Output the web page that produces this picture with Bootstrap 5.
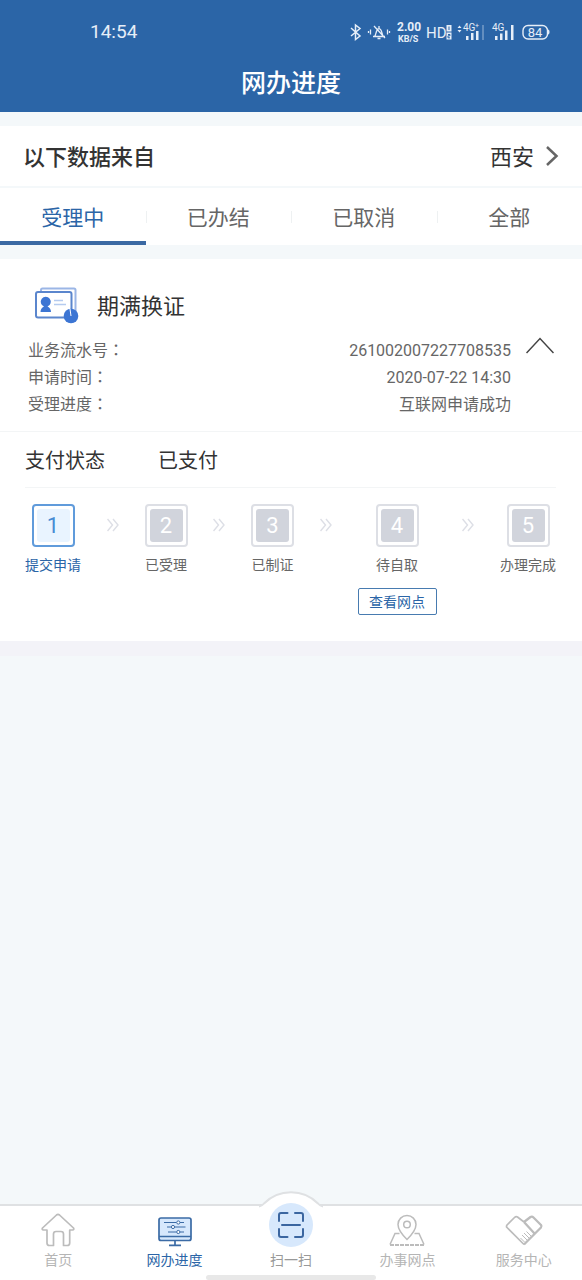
<!DOCTYPE html>
<html lang="zh-CN">
<head>
<meta charset="utf-8">
<meta name="viewport" content="width=device-width, initial-scale=1">
<title>网办进度</title>
<link href="https://cdn.jsdelivr.net/npm/bootstrap@5.3.0/dist/css/bootstrap.min.css" rel="stylesheet">
<style>
  :root { --brand: #2b65a7; --page: #f4f8fa; --muted: #666; }
  body { font-family: Roboto, "Noto Sans CJK SC", sans-serif; background: var(--page); color: #333; }
  button, a { font-family: inherit; }
  .app-head { background: var(--brand); height: 112px; }
  .status-line { height: 56px; padding: 8px 30px 0 90px; font-size: 19px; line-height: 24px; color: #e6eef8; }
  .app-title { font-size: 25px; line-height: 56px; font-weight: 500; }
  .panel { margin-top: 14px; background: #fff; }
  .source-row { height: 62px; padding: 0 20px 0 23px; border-bottom: 2px solid var(--page); font-size: 22px; font-weight: 500; line-height: 64px; }
  .source-row button { color: inherit; line-height: 64px; }
  .source-row svg { margin-bottom: 4px; }
  .tab-row { height: 57px; }
  .tab-row .tab-btn { position: relative; border: 0; background: none; font-size: 21px; line-height: 32px; padding: 6px 0 0; color: var(--muted); border-bottom: 4px solid transparent; }
  .tab-row .tab-btn + .tab-btn::before { content: ""; position: absolute; left: 0; top: 23px; height: 12px; border-left: 1px solid #eef1f2; }
  .tab-row .tab-btn.active { color: var(--brand); border-bottom-color: #3b69a3; }
  .order-title { font-size: 22px; line-height: 32px; font-weight: 400; }
  .order-head { padding: 28px 28px 13px; border-bottom: 1px solid #f3f5f6; }
  .order-name { gap: 17px; margin-bottom: 10px; }
  .facts { font-size: 16px; line-height: 27px; color: var(--muted); }
  .facts .colon { font-family: "Noto Sans CJK TC", sans-serif; line-height: 1; }
  .fold-btn { margin-left: 15px; line-height: 1; }
  .pay-row { font-size: 20px; line-height: 54px; padding-top: 2px; height: 56px; border-bottom: 1px solid #f3f5f6; gap: 53px; }
  .order-body { padding: 0 26px 26px 25px; }
  .steps { padding-top: 16px; }
  .step-item { font-size: 14px; line-height: 20px; color: var(--muted); }
  .step-box { width: 43px; height: 43px; border: 2px solid #dddfe5; border-radius: 4px; padding: 3px; margin-bottom: 8px; }
  .step-num { display: block; height: 33px; border-radius: 3px; background: #d1d4dc; color: #fff; font-size: 22px; line-height: 34px; text-align: center; }
  .step-item.current { color: var(--brand); }
  .step-item.current .step-box { border-color: #609bdb; }
  .step-item.current .step-num { background: #e9f4ff; color: #468bd3; }
  .step-arrow { margin-top: 14px; }
  .branch-btn { margin-top: 13px; width: 79px; height: 27px; padding: 0; border: 1px solid #477bb0; border-radius: 2px; background: #fff; color: var(--brand); font-size: 14px; line-height: 27px; }
  .band { height: 15px; background: #f3f3f8; }
  .dock { border-top: 2px solid #dfe1e3; height: 76px; }
  .dock a { flex: 1 1 0; font-size: 14px; line-height: 20px; color: #b5b5b5; padding-top: 6px; text-decoration: none; }
  .dock a.active { color: var(--brand); }
  .dock a.scan { color: #999; }
  .dock a svg { display: block; height: 38px; }
  .bump { position: absolute; left: 50%; top: -15px; transform: translateX(-50%); }
  .grip { position: absolute; left: 50%; bottom: 0; transform: translateX(-50%); width: 170px; height: 5px; border-radius: 3px; background: #e8e8e8; }
</style>
</head>
<body>
<div class="d-flex flex-column min-vh-100">
  <header class="app-head text-white">
    <div class="status-line d-flex justify-content-between align-items-center">
      <time>14:54</time>
      <svg width="204" height="24" viewBox="0 0 204 24" fill="none" stroke="#e6eef8" stroke-width="1.4" role="img" aria-label="状态图标">
        <path d="M3 8l9 8-4.500 3.500V5L12 8.500 3 16" stroke-width="1.500"/>
        <path d="M25 16.500h12M26.500 16.500c2-2 1-7 4.500-8 3.500 1 2.500 6 4.500 8M31 6v2M29.500 18.500h3M26 6l11 12M22.500 9.500v5M39.500 9.500v5M20.500 11v2M41.500 11v2" stroke-width="1.300"/>
        <g fill="#e6eef8" stroke="none" font-family="Roboto, sans-serif">
          <text x="49" y="11" font-size="12" font-weight="700">2.00</text>
          <text x="50" y="22" font-size="9" font-weight="700">KB/S</text>
          <text x="78" y="18" font-size="15">HD</text>
          <text x="115" y="11" font-size="10">4G</text>
          <text x="127" y="8" font-size="7">+</text>
          <text x="144" y="11" font-size="10">4G</text>
          <path d="M98.500 5h5v6.500h-5zM98.500 12.500h5v7h-5z"/>
          <path d="M109.500 8l2-2.500 2 2.500zM109.500 10l2 2.500 2-2.500zM118 16h2.500v4H118zM123 13h2.500v7H123zM128 11h2.500v9H128zM147 16h2.500v4H147zM152 13.500h2.500v6.500H152zM157 10.500h2.500v9.500H157zM163 5h2.500v15H163z"/>
          <path d="M134 5h2v15h-2z" opacity=".3"/>
          <path d="M200 9.500c2 0 2 5 0 5z"/>
          <text x="187" y="16.500" font-size="13" text-anchor="middle">84</text>
        </g>
        <path d="M101 6.500v3.500M100 14.500h2v1.300h-2v2h2" stroke="#2b65a7" stroke-width="1"/>
        <rect x="175" y="5.500" width="24.500" height="13.500" rx="5"/>
      </svg>
    </div>
    <h1 class="app-title text-center m-0">网办进度</h1>
  </header>

  <main>
    <section class="panel">
      <div class="source-row d-flex justify-content-between align-items-start">
        <span>以下数据来自</span>
        <button type="button" class="border-0 bg-transparent p-0 d-flex align-items-center">西安
          <svg class="ms-2" width="20" height="22" viewBox="0 0 20 22" fill="none" stroke="#666" stroke-width="2.500"><path d="M5 2l9.500 9L5 20"/></svg>
        </button>
      </div>
      <nav class="tab-row row row-cols-4 g-0" aria-label="办理状态">
        <button type="button" class="tab-btn col active">受理中</button>
        <button type="button" class="tab-btn col">已办结</button>
        <button type="button" class="tab-btn col">已取消</button>
        <button type="button" class="tab-btn col">全部</button>
      </nav>
    </section>

    <article class="panel">
      <div class="order-head">
        <div class="order-name d-flex align-items-center">
          <svg width="52" height="40" viewBox="0 0 52 40" fill="none">
            <path d="M13 4.500v-1.500q0-1.500 1.500-1.500H46q1.500 0 1.500 1.500V26" stroke="#9bb6e6" stroke-width="2"/>
            <rect x="8" y="5" width="35.500" height="25.500" rx="2" fill="#fff" stroke="#5b86cd" stroke-width="2"/>
            <path d="M26 13.500h9M26 17.500h12" stroke="#b5cbef" stroke-width="1.500"/>
            <path d="M12.500 25q0-4 3.500-5.500a5 5 0 1 1 3.500 0q3.500 1.500 3.500 5.500z" fill="#3c75d3"/>
            <circle cx="43" cy="29" r="7.300" fill="#3c75d3"/><path d="M43 29l-1-7" stroke="#fff"/>
          </svg>
          <h2 class="order-title m-0">期满换证</h2>
        </div>
        <div class="d-flex align-items-start">
          <div class="facts flex-grow-1">
            <div class="d-flex justify-content-between"><span>业务流水号<span class="colon" lang="zh-TW">：</span></span><span>261002007227708535</span></div>
            <div class="d-flex justify-content-between"><span>申请时间<span class="colon" lang="zh-TW">：</span></span><span>2020-07-22 14:30</span></div>
            <div class="d-flex justify-content-between"><span>受理进度<span class="colon" lang="zh-TW">：</span></span><span>互联网申请成功</span></div>
          </div>
          <button type="button" class="fold-btn border-0 bg-transparent p-0" aria-label="收起">
            <svg class="d-block" width="28" height="18" viewBox="0 0 28 18" fill="none" stroke="#444" stroke-width="1.500"><path d="M.500 16L14 1.500 27.500 16"/></svg>
          </button>
        </div>
      </div>

      <div class="order-body">
        <div class="pay-row d-flex"><span>支付状态</span><span>已支付</span></div>
        <div class="steps d-flex justify-content-between align-items-start">
          <div class="step-item current d-flex flex-column align-items-center"><div class="step-box"><span class="step-num">1</span></div>提交申请</div>
          <svg class="step-arrow" width="12" height="14" viewBox="0 0 12 14" fill="none" stroke="#dddfe6" stroke-width="1.400"><path d="M.500 1l5 6-5 6M6 1l5 6-5 6"/></svg>
          <div class="step-item d-flex flex-column align-items-center"><div class="step-box"><span class="step-num">2</span></div>已受理</div>
          <svg class="step-arrow" width="12" height="14" viewBox="0 0 12 14" fill="none" stroke="#dddfe6" stroke-width="1.400"><path d="M.500 1l5 6-5 6M6 1l5 6-5 6"/></svg>
          <div class="step-item d-flex flex-column align-items-center"><div class="step-box"><span class="step-num">3</span></div>已制证</div>
          <svg class="step-arrow" width="12" height="14" viewBox="0 0 12 14" fill="none" stroke="#dddfe6" stroke-width="1.400"><path d="M.500 1l5 6-5 6M6 1l5 6-5 6"/></svg>
          <div class="step-item d-flex flex-column align-items-center"><div class="step-box"><span class="step-num">4</span></div>待自取<button type="button" class="branch-btn">查看网点</button></div>
          <svg class="step-arrow" width="12" height="14" viewBox="0 0 12 14" fill="none" stroke="#dddfe6" stroke-width="1.400"><path d="M.500 1l5 6-5 6M6 1l5 6-5 6"/></svg>
          <div class="step-item d-flex flex-column align-items-center"><div class="step-box"><span class="step-num">5</span></div>办理完成</div>
        </div>
      </div>
    </article>
    <div class="band"></div>
  </main>

  <nav class="dock d-flex bg-white position-relative mt-auto" aria-label="主导航">
    <svg class="bump" width="64" height="62" viewBox="0 0 64 62">
      <path d="M0 15.500Q3 15 5 12.500A38 38 0 0 1 59 12.500Q61 15 64 15.500V40H0z" fill="#fff"/>
      <path d="M0 15.500Q3 15 5 12.500A38 38 0 0 1 59 12.500Q61 15 64 15.500" fill="none" stroke="#dfe1e3" stroke-width="2"/>
      <circle cx="32" cy="34" r="22" fill="#d7e8fc"/>
    </svg>
    <a href="#" class="d-flex flex-column align-items-center position-relative">
      <svg width="40" viewBox="0 0 40 38" fill="none" stroke="#bcbcbc" stroke-width="1.700" stroke-linejoin="round"><path d="M18.500 3q1.500-1.300 3 0L35.500 16q1 1.800-1 2h-2.800V31q0 2.500-2.500 2.500h-3.700V22q0-2.500-2.500-2.500h-5q-2.500 0-2.500 2.500v11.500H11.500Q9 33.500 9 31V18H5.500q-2-.200-1-2z"/></svg>
      首页</a>
    <a href="#" class="active d-flex flex-column align-items-center position-relative">
      <svg width="40" viewBox="0 0 40 38" fill="none" stroke="#3b6ba5" stroke-width="1.700"><rect x="4" y="6" width="32" height="22.500" rx="2" fill="#d7e8fc"/><path d="M4 24.500h32M20 28.500v4.500M14 33.300h12"/><path d="M9 10.500h12.500M25 10.500h4M12 15h4M20 15h10.500M13 20h8.500M25 20h4" stroke-width="1"/><g fill="#fff" stroke-width="1"><circle cx="23.300" cy="10.500" r="1.600"/><circle cx="18" cy="15" r="1.600"/><circle cx="23.300" cy="20" r="1.600"/></g></svg>
      网办进度</a>
    <a href="#" class="scan d-flex flex-column align-items-center position-relative">
      <svg width="40" viewBox="0 0 40 38" fill="none" stroke="#3b66a0" stroke-width="2" stroke-linecap="round"><path d="M16.500 1H10q-2 0-2 2v6M24 1h6q2 0 2 2v6M8 17v6q0 2 2 2h6.500M32 17v6q0 2-2 2h-6M11 13h18"/></svg>
      扫一扫</a>
    <a href="#" class="d-flex flex-column align-items-center position-relative">
      <svg width="40" viewBox="0 0 40 38" fill="none" stroke="#bcbcbc" stroke-width="1.500"><path d="M20 27.500Q11 18.500 11 12.500a9 9 0 0 1 18 0Q29 18.500 20 27.500z"/><circle cx="20" cy="12.500" r="3.300"/><path d="M12.500 21.500H8L3 32.500M27.500 21.500H32L37 32.500"/><path d="M3 33h34" stroke-width="2" stroke-dasharray="4 1"/></svg>
      办事网点</a>
    <a href="#" class="d-flex flex-column align-items-center position-relative">
      <svg width="40" viewBox="0 0 40 38" fill="none" stroke="#bcbcbc" stroke-width="1.700" stroke-linejoin="round"><path d="M20 10l-6.500-5q-1.500-1-3 .500L3 13q-1 1.500 0 2.500L20 32.500"/><path d="M20 10l6.500-5q1.500-1 3 .500L37 13q1 1.500 0 2.500L20 32.500M20 10l10.500 11.500" stroke-width="2.300"/><path d="M18 23l5 5M20 21l5 5M22.500 19.500l4.500 4.500M16.500 26l4 4" stroke-width="1"/></svg>
      服务中心</a>
    <span class="grip"></span>
  </nav>
</div>
<script src="https://cdn.jsdelivr.net/npm/bootstrap@5.3.0/dist/js/bootstrap.bundle.min.js"></script>
</body>
</html>
